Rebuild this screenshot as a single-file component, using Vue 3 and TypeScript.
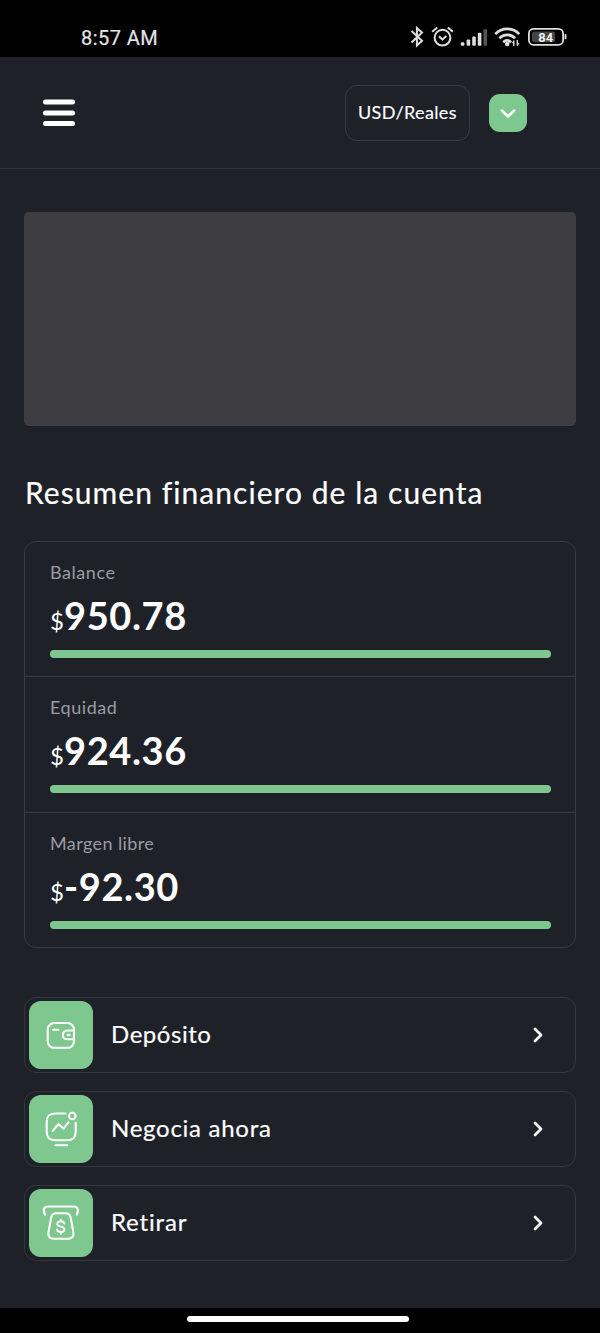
<script setup lang="ts">
interface Metric {
  label: string
  value: string
  progress: number
  slug: string
}

interface Action {
  label: string
  icon: 'wallet' | 'trade' | 'withdraw'
}

const metrics: Metric[] = [
  { label: 'Balance', value: '950.78', progress: 100, slug: 'balance' },
  { label: 'Equidad', value: '924.36', progress: 100, slug: 'equity' },
  { label: 'Margen libre', value: '-92.30', progress: 100, slug: 'margin' },
]

const actions: Action[] = [
  { label: 'Depósito', icon: 'wallet' },
  { label: 'Negocia ahora', icon: 'trade' },
  { label: 'Retirar', icon: 'withdraw' },
]
</script>

<template>
  <div class="screen">
    <div class="status">
      <span class="clock">8:57 AM</span>
      <svg class="status-icons" width="160" height="30" viewBox="0 0 160 30" fill="none" stroke="#dedede" stroke-linecap="butt">
        <path d="M1.500 9 12 18.700 6.900 23.400V6l5.100 4.600L1.500 20.400" stroke-width="2" />
        <g stroke-width="2">
          <circle cx="32.500" cy="15.700" r="7.900" />
          <path d="M29 14.200l3.400 3.200 4-3.300M22.200 9.700l5-4.300M37.800 5.400l5 4.300" />
        </g>
        <g fill="#dedede" stroke="none">
          <rect x="50.800" y="20.300" width="3.600" height="3.500" rx="1" />
          <rect x="56.600" y="17.500" width="3.600" height="6.300" rx="1" />
          <rect x="62.200" y="14.400" width="3.600" height="9.400" rx="1" />
          <rect x="67.800" y="10.700" width="3.600" height="13.100" rx="1" />
          <rect x="73.500" y="7.300" width="3.600" height="16.500" rx="1" fill="#555" />
        </g>
        <g stroke-width="2.700">
          <path d="M85.200 12.200c6.500-7 17.500-7 24 0M89.300 16.300c4.600-4.600 11.300-4.600 15.800 0M93.200 20.200c2.400-2.200 5.500-2.200 7.900 0" />
        </g>
        <circle cx="97.200" cy="22" r="2.300" fill="#dedede" stroke="none" />
        <path d="M103.800 18.500v5.500M107.300 18v5.500" stroke-width="1.400" />
        <path d="M103.800 18.400l-2.300 2.800h2.300zM107.300 24l2.300-2.800h-2.300z" fill="#dedede" stroke="none" />
        <rect x="118.900" y="6.900" width="34.200" height="15.900" rx="4.600" stroke-width="1.800" />
        <rect x="122" y="9.600" width="23" height="10.600" rx="2" fill="#444" stroke="none" />
        <path d="M155.500 12.200v5" stroke-width="1.900" />
        <text class="battery" x="135.700" y="19.700" text-anchor="middle" fill="#efefef" stroke="none">84</text>
      </svg>
    </div>

    <header class="topbar">
      <svg class="menu" width="34" height="28" viewBox="0 0 34 28" stroke="#fff" stroke-width="5" stroke-linecap="round">
        <path d="M3.500 3h27M3.500 13.900h27M3.500 24.600h27" />
      </svg>
      <div class="topbar-right">
        <div class="currency"><span>USD/Reales</span></div>
        <button class="dropdown" type="button" aria-label="Cambiar moneda">
          <svg width="38" height="38" viewBox="0 0 38 38" fill="none" stroke="#fff" stroke-width="2.500" stroke-linecap="round" stroke-linejoin="round">
            <path d="M12.800 16.500l6.200 6 6.200-6" />
          </svg>
        </button>
      </div>
    </header>

    <main class="content">
      <div class="banner"></div>
      <h1 class="title">Resumen financiero de la cuenta</h1>

      <section class="summary">
        <div v-for="m in metrics" :key="m.slug" class="metric">
          <div class="label" :class="m.slug">{{ m.label }}</div>
          <div class="amount" :class="m.slug"><span class="sign">$</span><span class="value">{{ m.value }}</span></div>
          <div class="track"><div class="fill" :style="{ width: m.progress + '%' }"></div></div>
        </div>
      </section>

      <nav class="actions">
        <a v-for="a in actions" :key="a.icon" class="action">
          <span class="tile">
            <svg width="64" height="68" viewBox="0 0 64 68" fill="none" stroke="#fff" stroke-width="2.100" stroke-linecap="round" stroke-linejoin="round">
              <g v-if="a.icon === 'wallet'">
                <rect x="18.700" y="22" width="26.300" height="24.800" rx="6.500" />
                <path d="M45 29.500h-6.800a4.400 4.400 0 0 0 0 8.800H45M24 28.700h5.500M38.700 33.900h1.800" />
              </g>
              <g v-else-if="a.icon === 'trade'">
                <path d="M36.500 18.500H26.500c-6.500 0-8.800 2.400-8.800 8.600v9.400c0 6.400 2.300 8.800 8.800 8.800h11.400c6.500 0 8.800-2.400 8.800-8.800v-8.700M23.700 36l5.700-7 5.200 4.700 4.900-6.300M26.500 50.300h11.700" />
                <circle cx="43.300" cy="21" r="3.300" />
              </g>
              <g v-else>
                <path d="M16 25.700c-2.500-4.800-1-8.200 3-8.200h25.700c4 0 5.500 3.400 3 8.200M27.500 24.300h8.800c3 0 4.600 1.300 5.300 4l2.700 14.600c.8 4.500-1.200 6.800-5.300 6.800H24.700c-4.100 0-6.100-2.300-5.200-6.800l2.700-14.600c.6-2.700 2.200-4 5.300-4z" />
                <path d="M35.300 34.500c-.5-1.500-1.700-2.200-3.500-2.200-2.100 0-3.500 1-3.500 2.600 0 3.700 7.200 1.700 7.200 5.400 0 1.700-1.500 2.700-3.700 2.700-2 0-3.400-.9-3.800-2.500M31.800 30.500v1.800M31.800 43v1.800" stroke-width="1.900" />
              </g>
            </svg>
          </span>
          <span class="action-label" :class="a.icon">{{ a.label }}</span>
          <svg class="chevron" width="12" height="18" viewBox="0 0 12 18" fill="none" stroke="#fff" stroke-width="2.800" stroke-linecap="round" stroke-linejoin="round">
            <path d="M3 3l6 6-6 6" />
          </svg>
        </a>
      </nav>
    </main>

    <div class="gesture"><div class="pill"></div></div>
  </div>
</template>

<style>
body {
  background: #1f2129;
}
</style>

<style scoped>
* {
  box-sizing: border-box;
}
.screen {
  width: 600px;
  height: 1333px;
  display: flex;
  flex-direction: column;
  background: #1f2129;
  color: #fff;
  font-family: Lato, "Open Sans", sans-serif;
  overflow: hidden;
}
.status {
  height: 57px;
  flex: none;
  background: #000;
  display: flex;
  justify-content: space-between;
  padding: 22px 30px 0 81px;
}
.clock {
  font: 400 20px/32px Roboto, sans-serif;
  letter-spacing: 0.450px;
  color: #e4e4e4;
  -webkit-text-stroke: 0.200px #e4e4e4;
}
.battery {
  font: 700 13px Roboto, sans-serif;
}
.topbar {
  height: 112px;
  flex: none;
  border-bottom: 1px solid #30323a;
  display: flex;
  align-items: center;
  justify-content: space-between;
  padding: 0 73px 0 42px;
}
.topbar-right {
  display: flex;
  align-items: center;
  gap: 19px;
}
.currency {
  width: 125px;
  height: 56px;
  border: 1px solid #383a43;
  border-radius: 12px;
  display: flex;
  align-items: center;
  padding: 0 0 2px 12px;
  font-size: 18px;
  letter-spacing: 0.350px;
  white-space: nowrap;
  -webkit-text-stroke: 0.150px #fff;
}
.dropdown {
  width: 38px;
  height: 38px;
  padding: 0;
  border: 0;
  border-radius: 11px;
  background: #7ec88f;
  display: flex;
}
.content {
  flex: 1;
  padding: 43px 24px 0;
}
.banner {
  height: 214px;
  border-radius: 5px;
  background: #3e3e42;
}
.title {
  margin: 46px 0 0;
  padding-left: 1px;
  height: 40px;
  font-size: 30px;
  line-height: 40px;
  font-weight: 400;
  white-space: nowrap;
  letter-spacing: 1.050px;
  font-variant-ligatures: none;
  -webkit-text-stroke: 0.200px #fff;
}
.summary {
  margin-top: 29px;
  border: 1px solid #373941;
  border-radius: 12px;
}
.metric {
  height: 134px;
  padding: 17px 24px 0 25px;
}
.metric + .metric {
  height: 136px;
  border-top: 1px solid #373941;
}
.metric + .metric:last-child {
  height: 135px;
}
.label {
  font-size: 18px;
  line-height: 26px;
  letter-spacing: 0.550px;
  color: #9a9ba4;
}
.label.margin {
  letter-spacing: 0.400px;
}
.amount {
  height: 48px;
  margin-top: 6px;
  display: flex;
  align-items: baseline;
  line-height: 48px;
}
.sign {
  width: 14px;
  font-size: 24px;
}
.value {
  font-size: 38px;
  font-weight: 700;
  letter-spacing: 0.600px;
}
.track {
  height: 8px;
  margin-top: 11px;
  border-radius: 4px;
  background: #34363e;
}
.fill {
  height: 100%;
  border-radius: 4px;
  background: #7ec88f;
}
.actions {
  margin-top: 49px;
  display: flex;
  flex-direction: column;
  gap: 18px;
}
.action {
  height: 76px;
  border: 1px solid #34353e;
  border-radius: 12px;
  display: flex;
  align-items: center;
  padding: 0 31px 0 4px;
}
.tile {
  width: 64px;
  height: 68px;
  border-radius: 12px;
  background: #7ec88f;
  display: flex;
}
.action-label {
  flex: 1;
  margin-left: 18px;
  padding-bottom: 3px;
  font-size: 24px;
  white-space: nowrap;
  letter-spacing: 0.550px;
  -webkit-text-stroke: 0.200px #fff;
}
.action-label.trade {
  letter-spacing: 0.720px;
}
.action-label.withdraw {
  letter-spacing: 0.850px;
}
.gesture {
  height: 25px;
  flex: none;
  background: #000;
  display: flex;
  justify-content: center;
  padding: 8px 4px 0 0;
}
.pill {
  width: 222px;
  height: 6px;
  border-radius: 3px;
  background: #fff;
}
</style>
